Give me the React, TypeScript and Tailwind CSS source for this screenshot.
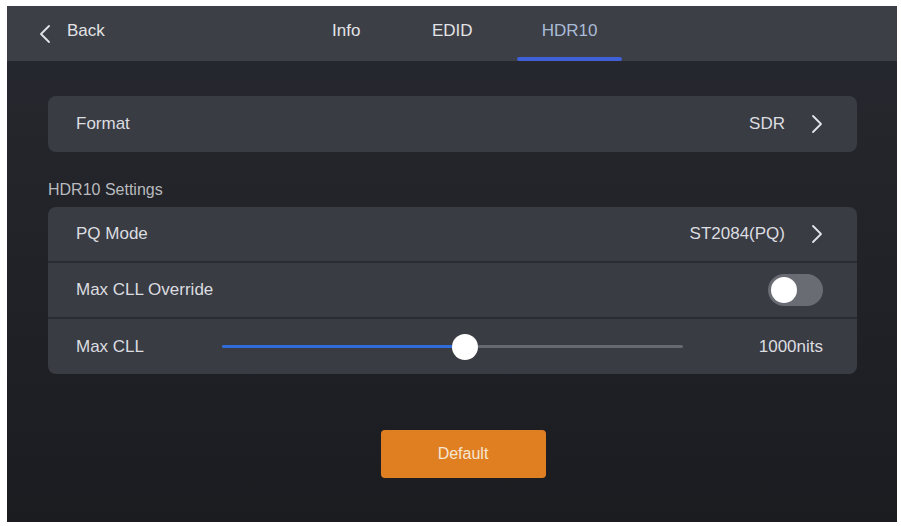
import React from 'react';

function Chevron({ dir = 'right' }: { dir?: 'left' | 'right' }) {
  return (
    <svg width="12" height="20" viewBox="0 0 12 20" className="shrink-0">
      <polyline
        points={dir === 'right' ? '2,2 10,10 2,18' : '10,2 2,10 10,18'}
        fill="none"
        stroke="#e4e5e8"
        strokeWidth="1.8"
        strokeLinecap="round"
        strokeLinejoin="round"
      />
    </svg>
  );
}

function Row({ children, last }: { children: React.ReactNode; last?: boolean }) {
  return (
    <div
      className={
        'flex items-center pl-[28px] pr-[34px] ' +
        (last ? 'h-[55px]' : 'h-[56px] border-b-2 border-[#2a2c32]')
      }
    >
      {children}
    </div>
  );
}

export default function App() {
  const pct = 52.7;
  return (
    <div
      className="w-[901px] h-[526px] bg-white pl-[7px] pt-[6px]"
      style={{ fontFamily: '"Liberation Sans", Arial, sans-serif' }}
    >
      <div className="w-[890px] h-[516px] flex flex-col overflow-hidden bg-gradient-to-b from-[#272930] to-[#1a1c20]">
        {/* Header */}
        <div className="h-[55px] shrink-0 bg-[#3d3f47] flex items-center text-[17px] text-[#e2e3e6]">
          <div className="flex items-center pl-[32px] w-[325px]">
            <Chevron dir="left" />
            <span className="ml-[16px] -mt-[5px]">Back</span>
          </div>
          <div className="flex h-full items-center">
            <span className="w-[100px] -mt-[5px]">Info</span>
            <span className="w-[85px] -mt-[5px]">EDID</span>
            <div className="relative w-[105px] h-full flex items-center justify-center">
              <span className="-mt-[5px] text-[#a9bcd6]">HDR10</span>
              <div className="absolute left-0 right-0 bottom-0 h-[4px] rounded-full bg-[#3f60d6]" />
            </div>
          </div>
        </div>

        {/* Body */}
        <div className="flex flex-col pr-[40px] pl-[41px] pt-[35px] text-[17px] text-[#dcdde0]">
          <div className="h-[56px] rounded-[8px] bg-[#3a3c43] flex items-center pl-[28px] pr-[34px]">
            <span className="flex-1">Format</span>
            <span className="mr-[26px]">SDR</span>
            <Chevron />
          </div>

          <div className="mt-[30px] mb-[9px] text-[16px] text-[#b9babe] leading-[16px]">HDR10 Settings</div>

          <div className="rounded-[8px] bg-[#3a3c43] overflow-hidden">
            <Row>
              <span className="flex-1">PQ Mode</span>
              <span className="mr-[26px]">ST2084(PQ)</span>
              <Chevron />
            </Row>
            <Row>
              <span className="flex-1">Max CLL Override</span>
              <div className="w-[55px] h-[32px] rounded-full bg-[#6a6c73] flex items-center px-[3px]">
                <div className="w-[26px] h-[26px] rounded-full bg-white" />
              </div>
            </Row>
            <Row last>
              <span className="w-[146px]">Max CLL</span>
              <div className="relative w-[461px] h-[3px] rounded-full bg-[#67696f]">
                <div className="absolute left-0 top-0 h-[3px] rounded-full bg-[#2f6bd9]" style={{ width: `${pct}%` }} />
                <div
                  className="absolute top-1/2 w-[26px] h-[26px] -ml-[13px] -mt-[13px] rounded-full bg-white"
                  style={{ left: `${pct}%` }}
                />
              </div>
              <span className="flex-1 text-right">1000nits</span>
            </Row>
          </div>

          <div className="flex justify-center mt-[56px] pl-[21px]">
            <button className="w-[165px] h-[48px] rounded-[4px] bg-[#e07f22] text-[16px] text-[#f6e6d2]">
              Default
            </button>
          </div>
        </div>
      </div>
    </div>
  );
}
